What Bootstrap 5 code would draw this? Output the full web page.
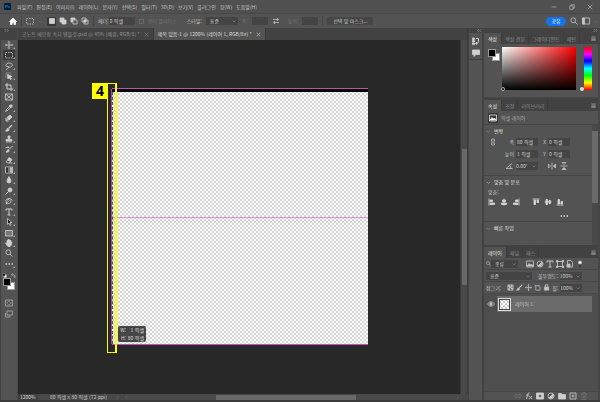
<!DOCTYPE html>
<html lang="ko">
<head>
<meta charset="utf-8">
<meta name="viewport" content="width=device-width, initial-scale=1">
<title>제목 없음-1</title>
<link href="https://cdn.jsdelivr.net/npm/bootstrap@5.3.0/dist/css/bootstrap.min.css" rel="stylesheet">
<style>
:root{--face:#535353;--strip:#424242;--field:#444;--edge:#454545;--ink:#c4c4c4;--dim:#929292;--faint:#707070}
body{font:5px/8px "Noto Sans CJK KR","Liberation Sans",sans-serif;color:var(--ink);background:var(--face);height:100vh;overflow:hidden;border-bottom:2px solid #3b3b3b;white-space:nowrap}
button,input,select,label,a{font:inherit;color:inherit}
button,.ps-tab{border:0;background:none;padding:0;display:inline-flex;align-items:center;justify-content:center;flex:none}
svg{width:8px;height:8px;fill:none;stroke:currentColor;stroke-width:1.6;flex:none;display:block}
svg.tiny{width:5px;height:5px}
.solid{fill:currentColor}
.menubar{height:13px;padding-left:4px;background:#505050}
.menubar nav{gap:4px;padding-left:6px}
.menubar a{text-decoration:none}
.logo{width:7px;height:7px;stroke:none}
.wincontrols{gap:12px;padding-right:7px}
.wincontrols svg{width:6px;height:6px}
.options{height:15px;border-top:1px solid #484848;padding:0 1px 0 9px}
.vline{width:1px;height:10px;background:#454545;flex:none}
.opt-modes{gap:2px;padding-left:4px}
.opt-modes button{width:9px;height:9px;color:#d0d0d0}
.opt-modes .active{background:#383838}
.fieldbox{height:8px;border:0;border-radius:0;background:var(--field);padding:0 1px;min-width:0;outline:0;color:#cfcfcf}
select.fieldbox{appearance:none;padding:0 7px 0 4px;background:var(--field) url("data:image/svg+xml,%3Csvg xmlns='http://www.w3.org/2000/svg' viewBox='0 0 8 8' fill='none' stroke='%23999'%3E%3Cpath d='M1 3l3 3 3-3'/%3E%3C/svg%3E") no-repeat right 2px center/4px 4px}
.fieldbox:disabled{opacity:1;color:var(--faint)}
.muted{color:var(--faint)}
.stylelabel{padding-left:10px}
.w16{width:16px}.w22{width:22px}.w26{width:26px}.w32{width:32px}.w46{width:46px}
.tick{appearance:none;width:5px;height:5px;border:1px solid #666;margin:0}
.share{background:#1473e6;border-radius:5px;width:20px;height:9px;color:#fff}
.maskbtn{background:#464646;width:46px;height:8px}
.toolcol{width:18px;background:var(--face);border-right:1px solid #484848;border-left:1px solid #424242}
.toolhead{height:12px;background:var(--strip);color:#aaa;padding:0 3px}
.toolcol .tools{height:229px}
.tools button{width:12px;height:10px;position:relative;color:#cfcfcf}
.tools button.active{background:#383838}
.tools button.more::after{content:"";position:absolute;right:0;bottom:1px;border:1px solid;border-color:transparent #aaa #aaa transparent}
.swatches{width:12px;height:20px;margin:0 auto;position:relative}
.chip{position:absolute;width:8px;height:8px;border:1px solid #999}
.chip.back{background:#fff;left:4px;top:4px}
.chip.front{background:#000;left:0;top:0}
.modes{gap:1px}.modes button{height:10px;color:#aaa}
.doctabs{height:12px;background:var(--strip);border-right:1px solid #393939}
.doctabs .ps-tab{color:#8f8f8f;padding:0 4px;gap:4px;border-right:1px solid #393939}
.doctabs .ps-tab.active{background:var(--face);color:#ddd}
.canvas{background:#282828;min-width:0;padding:0 0 2px 2px}
.vbar{width:8px;background:#484848;border-left:1px solid #393939;border-right:1px solid #3c3c3c;color:#777;padding:109px 1px 0}
.vbar i,.hbar i{display:block;background:#686868}
.vbar i{height:136px;width:5px}
.artboard{width:256px;height:257px;position:relative;border:1px solid #c050bc;border-width:1px 0;background:repeating-conic-gradient(#d2d2d2 0 25%,#fff 0 50%) 0 0/4px 4px}
.artboard .pixels{height:3px;background:#000}
.artboard .guide{position:absolute;left:0;right:0;top:128px;height:1px;background:#df91dc}
.guide-left{position:absolute;left:-1px;top:0;bottom:0;width:1px;background:#9c4a99}
.ants{position:absolute;left:0;top:3px;bottom:0;width:4px;border-right:1px dashed #333;border-left:1px dashed #555}
.callout{position:absolute;left:-5px;top:-6px;width:10px;height:270px;border:solid #ff0;border-width:1px 2px 1px 1px}
.callout b{position:absolute;right:7px;top:-1px;width:16px;height:16px;background:#ff0;color:#000;font:bold 14px/16px "Noto Sans",sans-serif;text-align:center}
.readout{position:absolute;left:6px;bottom:2px;width:28px;border-radius:2px;background:#454545;color:#ddd;line-height:8px;padding:0 2px;display:grid;grid-template-columns:6px 1fr;text-align:right}
.statusbar{height:6px;line-height:6px;background:#484848}
.zoomval{width:20px;background:#3f3f3f;padding-left:2px;color:#ddd}
.hbar{padding-right:12px}
.hbar i{width:140px;height:5px}
.dock{width:16px;border-right:2px solid var(--strip);border-left:1px solid #424242;background:var(--face)}
.dockhead{height:5px;background:var(--strip);color:#aaa}
.dockicons{height:27px;border-bottom:1px solid #404040;padding-top:4px;gap:4px;color:#d0d0d0}
.panels{width:116px;border-right:2px solid #464646}
.ptabs{height:11px;background:var(--strip)}
.ptabs .ps-tab{color:#8c8c8c;padding:0 3px;border-right:1px solid #3b3b3b}
.ptabs .ps-tab.active{color:#e8e8e8;background:var(--face);padding:0 4px}
.ptabs .menuicon{margin-left:auto;padding-right:2px}
.colorbody{height:54px;padding:3px 6px 0 4px;border-bottom:1px solid #464646}
.pair{width:14px;height:14px;position:relative;margin-top:2px}
.field2d{height:43px;background:linear-gradient(transparent,#000),linear-gradient(90deg,#fff,#f00);position:relative}
.huebar{width:8px;height:43px;background:linear-gradient(red,#f0f 17%,#00f 33%,#0ff 50%,#0f0 67%,#ff0 83%,red)}
.hueslot{height:44px}
.huedot{width:4px;height:4px;border-radius:50%;background:#ddd}
.pickdot{position:absolute;left:-1px;bottom:-1px;width:4px;height:4px;border:1px solid #aaa;border-radius:50%}
.props{height:147px;border-top:2px solid var(--strip)}
.kind{height:14px;gap:3px;padding-left:4px;border-bottom:1px solid var(--edge);color:#aaa}
.kind span{background:#333;padding:1px;color:#eee}
.section{height:12px;gap:3px;padding-left:2px;color:#e0e0e0}
.section svg{color:#999}
.pgrid{display:grid;grid-template-columns:14px 14px 22px 8px 22px;column-gap:1px;row-gap:4px;align-items:center;padding:1px 0 0 2px}
.pgrid label{text-align:right;padding-right:1px}
.transform{height:51px;border-bottom:1px solid var(--edge)}
.alignbox{height:46px;border-bottom:1px solid var(--edge)}
.alignbox .btns{gap:4px;padding:0 0 0 4px;height:12px}
.alignbox svg{color:#d8d8d8}
.pscroll{width:6px;background:#484848;padding-top:6px}
.pscroll i{display:block;height:72px;background:#6a6a6a}
.layers{border-top:2px solid var(--strip)}
.lrow{height:12px;padding:0 2px;gap:2px;border-bottom:1px solid #484848}
.lrow .filters{gap:2px;padding-left:6px}
.locks{gap:2px}
.locks svg{width:7px;height:7px}
.layerrow{height:16px;margin-top:2px}
.layeritem{background:#6b6b6b;gap:4px;margin-right:6px;padding-left:1px}
.eyecell{width:13px}
.thumb{width:13px;height:13px;border:1px solid #ddd;outline:1px solid #444;outline-offset:-2px;background:repeating-conic-gradient(#ccc 0 25%,#fff 0 50%) 0 0/4px 4px}
.layerlist{background:#4e4e4e}
.lfoot{height:9px;padding-left:30px;gap:3px;color:#cfcfcf;border-top:1px solid #484848}
</style>
<script src="https://cdn.jsdelivr.net/npm/bootstrap@5.3.0/dist/js/bootstrap.bundle.min.js"></script>
</head>
<body class="d-flex flex-column">
<svg class="d-none" aria-hidden="true">
<symbol id="down" viewBox="0 0 16 16"><path d="M3 6l5 5 5-5"/></symbol>
<symbol id="right" viewBox="0 0 16 16"><path d="M5 2l6 6-6 6"/></symbol>
<symbol id="left" viewBox="0 0 16 16"><path d="M11 2L5 8l6 6"/></symbol>
<symbol id="dbl" viewBox="0 0 16 16"><path d="M7 3L2 8l5 5M14 3L9 8l5 5"/></symbol>
<symbol id="dblr" viewBox="0 0 16 16"><path d="M2 3l5 5-5 5M9 3l5 5-5 5"/></symbol>
<symbol id="burger" viewBox="0 0 16 16"><path d="M1 3h14M1 7h14M1 11h14M1 14h14"/></symbol>
<symbol id="close" viewBox="0 0 16 16"><path d="M2 2l12 12M14 2L2 14"/></symbol>
<symbol id="home" viewBox="0 0 16 16"><path class="solid" d="M8 2L1 9h2v6h3v-4h4v4h3V9h2z"/></symbol>
<symbol id="marquee" viewBox="0 0 16 16"><path stroke-dasharray="3 2" d="M1 3h14v11H1z"/></symbol>
<symbol id="square" viewBox="0 0 16 16"><path class="solid" d="M3 3h10v10H3z"/></symbol>
<symbol id="union" viewBox="0 0 16 16"><path class="solid" d="M2 2h8v4h4v8H6v-4H2z"/></symbol>
<symbol id="subtract" viewBox="0 0 16 16"><path d="M6 6h8v8H6z"/><path class="solid" d="M2 2h8v3H5v5H2z"/></symbol>
<symbol id="intersect" viewBox="0 0 16 16"><path d="M2 2h8v8H2zM6 6h8v8H6z"/><path class="solid" d="M6 6h4v4H6z"/></symbol>
<symbol id="swap" viewBox="0 0 16 16"><path d="M2 5h11M10 2l3 3-3 3M14 11H3M6 8l-3 3 3 3"/></symbol>
<symbol id="search" viewBox="0 0 16 16"><circle cx="6.500" cy="6.500" r="4.800"/><path d="M10 10l5 5"/></symbol>
<symbol id="layout" viewBox="0 0 16 16"><path d="M1 2h14v12H1z"/><path class="solid" d="M1 2h4v12H1z"/></symbol>
<symbol id="move" viewBox="0 0 16 16"><path d="M8 1v14M1 8h14M6 3l2-2 2 2M6 13l2 2 2-2M3 6L1 8l2 2M13 6l2 2-2 2"/></symbol>
<symbol id="lasso" viewBox="0 0 16 16"><path d="M4 10C-1 7 3 2 9 2s8 6 2 8c-3 1-6 0-6-1s3 0 2 2-3 4-5 4"/></symbol>
<symbol id="quick" viewBox="0 0 16 16"><path stroke-dasharray="2 2" d="M2 11V2h10"/><path class="solid" d="M5 5l9 4-4 1 3 4-2 1-3-4-2 3z"/></symbol>
<symbol id="crop" viewBox="0 0 16 16"><path stroke-width="2" d="M4 0v12h12M0 4h12v12"/></symbol>
<symbol id="frame" viewBox="0 0 16 16"><path d="M1 2h14v12H1zM1 2l14 12M15 2L1 14"/></symbol>
<symbol id="dropper" viewBox="0 0 16 16"><path d="M9 5L3 11l-2 4 4-2 6-6"/><path class="solid" d="M8 4l2-1 2-2 3 3-2 2-1 2z"/></symbol>
<symbol id="heal" viewBox="0 0 16 16"><path class="solid" d="M4 7l6-5 4 4-6 6z"/><path stroke-width="2" d="M2 8v6h5M3 11l4 1"/></symbol>
<symbol id="brush" viewBox="0 0 16 16"><path stroke-width="2.500" d="M14 2L7 9"/><path class="solid" d="M6 9c-4 0-1 4-5 5 5 1 8-1 7-3z"/></symbol>
<symbol id="stamp" viewBox="0 0 16 16"><path class="solid" d="M6 2h4v3L9 9h5v3H2V9h5L6 5z"/><path d="M2 14h12"/></symbol>
<symbol id="history" viewBox="0 0 16 16"><path stroke-width="2" d="M15 2L8 9"/><path class="solid" d="M7 9c-3 0-2 4-5 5 4 1 7-1 6-3z"/><path d="M1 5h7L5 2"/></symbol>
<symbol id="eraser" viewBox="0 0 16 16"><path class="solid" d="M8 3l6 4-3 4-6-3z"/><path d="M5 8l-3 4 4 2h3l2-3M8 14h7"/></symbol>
<symbol id="grad" viewBox="0 0 16 16"><path class="gradbox" d="M1 2h14v12H1z"/><path stroke="none" fill="#333" d="M2 3h4v10H2z"/><path stroke="none" fill="#777" d="M6 3h4v10H6z"/><path stroke="none" fill="#bbb" d="M10 3h4v10h-4z"/></symbol>
<symbol id="drop" viewBox="0 0 16 16"><path class="solid" d="M8 1c2 4 4 6 4 9a4 4 0 0 1-8 0c0-3 2-5 4-9z"/></symbol>
<symbol id="dodge" viewBox="0 0 16 16"><circle class="solid" cx="10" cy="6" r="4"/><path stroke-width="2" d="M7 9l-6 6"/></symbol>
<symbol id="pen" viewBox="0 0 16 16"><path d="M2 13c0-5 2-8 6-8l4 4c-1 4-5 5-10 4zM2 13l5-4M10 3l4 4M1 7c3-5 11-6 13 0"/></symbol>
<symbol id="type" viewBox="0 0 16 16"><path stroke-width="2" d="M2 5V2h12v3M8 2v12M5 14h6"/></symbol>
<symbol id="arrow" viewBox="0 0 16 16"><path fill="#111" d="M5 1v12l3-3 2 5 2-1-2-5h4z"/></symbol>
<symbol id="rect" viewBox="0 0 16 16"><path fill="#777" d="M1 3h14v11H1z"/></symbol>
<symbol id="hand" viewBox="0 0 16 16"><path class="solid" d="M5 14L1 8l3 1V3h2v4-6h2v6-5h2v5-4h2v5l2-2-2 7-2 2H6z"/></symbol>
<symbol id="dots" viewBox="0 0 16 16"><path stroke-width="3" stroke-dasharray="3 3" d="M1 8h15"/></symbol>
<symbol id="mask" viewBox="0 0 16 16"><path d="M1 2h14v12H1z"/><circle cx="8" cy="8" r="3.500" stroke-dasharray="2 1"/></symbol>
<symbol id="screen" viewBox="0 0 16 16"><path d="M4 2h11v8H4zM1 6v8h9v-3"/></symbol>
<symbol id="mini" viewBox="0 0 16 16"><path fill="#fff" d="M6 6h8v8H6z"/><path fill="#000" d="M1 1h9v9H1z"/></symbol>
<symbol id="bend" viewBox="0 0 16 16"><path stroke-width="2" d="M2 5h7q3 0 3 8M5 1L1 5l4 4M9 11l3 4 3-4"/></symbol>
<symbol id="histpanel" viewBox="0 0 16 16"><path class="solid" d="M1 2h4v3H1zM1 7h4v3H1zM1 12h4v3H1z"/><path stroke-width="2" d="M8 3h5v6c0 3-2 4-5 4M10 10l-3 3 3 2"/></symbol>
<symbol id="bubble" viewBox="0 0 16 16"><path class="solid" d="M1 2h14v9H8l-4 4v-4H1z"/></symbol>
<symbol id="image" viewBox="0 0 16 16"><path d="M1 2h14v12H1z"/><path class="solid" d="M2 12l4-5 3 3 2-2 3 4z"/></symbol>
<symbol id="link" viewBox="0 0 16 16"><path d="M5 7V3q3-3 6 0v4M5 9v4q3 3 6 0V9M8 5v6"/></symbol>
<symbol id="hlink" viewBox="0 0 16 16"><path d="M7 5H3q-3 3 0 6h4M9 5h4q3 3 0 6H9M5 8h6"/></symbol>
<symbol id="angle" viewBox="0 0 16 16"><path d="M14 3L2 13h13M9 7q3 2 3 6"/></symbol>
<symbol id="fliph" viewBox="0 0 16 16"><path d="M8 1v14M1 4v8l4-4z"/><path class="solid" d="M15 4v8l-4-4z"/></symbol>
<symbol id="flipv" viewBox="0 0 16 16"><path d="M1 8h14M4 1h8L8 5z"/><path class="solid" d="M4 15h8l-4-4z"/></symbol>
<symbol id="al" viewBox="0 0 16 16"><path d="M2 1v14"/><path class="solid" d="M4 4h5v3H4zM4 10h9v3H4z"/></symbol>
<symbol id="ac" viewBox="0 0 16 16"><path d="M8 1v14"/><path class="solid" d="M5 4h6v3H5zM3 10h10v3H3z"/></symbol>
<symbol id="ar" viewBox="0 0 16 16"><path d="M14 1v14"/><path class="solid" d="M7 4h5v3H7zM3 10h9v3H3z"/></symbol>
<symbol id="at" viewBox="0 0 16 16"><path d="M1 2h14"/><path class="solid" d="M4 4h3v9H4zM10 4h3v5h-3z"/></symbol>
<symbol id="am" viewBox="0 0 16 16"><path d="M1 8h14"/><path class="solid" d="M4 3h3v10H4zM10 5h3v6h-3z"/></symbol>
<symbol id="ab" viewBox="0 0 16 16"><path d="M1 14h14"/><path class="solid" d="M4 3h3v9H4zM10 7h3v5h-3z"/></symbol>
<symbol id="adjust" viewBox="0 0 16 16"><circle cx="8" cy="8" r="6"/><path class="solid" d="M12 4A6 6 0 0 1 4 12z"/></symbol>
<symbol id="shape" viewBox="0 0 16 16"><path d="M3 3h10v10H3z"/><path class="solid" d="M1 1h3v3H1zM12 1h3v3h-3zM1 12h3v3H1zM12 12h3v3h-3z"/></symbol>
<symbol id="smart" viewBox="0 0 16 16"><path d="M3 1h7l3 4v9H3z"/><path class="solid" d="M2 8h6v6H2z"/></symbol>
<symbol id="toggle" viewBox="0 0 16 16"><path stroke="#333" stroke-width="3" d="M8 9v6"/><circle fill="#fff" cx="8" cy="5" r="3"/></symbol>
<symbol id="checker" viewBox="0 0 16 16"><path d="M2 2h12v12H2z"/><path class="solid" d="M3 3h3v3H3zM9 3h3v3H9zM6 6h3v3H6zM3 10h3v3H3zM10 9h3v3h-3z"/></symbol>
<symbol id="artlock" viewBox="0 0 16 16"><path d="M2 4h9M14 7v7H4V2M11 2v3h3"/></symbol>
<symbol id="lock" viewBox="0 0 16 16"><path class="solid" d="M3 7h10v7H3z"/><path stroke-width="2" d="M5 7V2h6v5"/></symbol>
<symbol id="eye" viewBox="0 0 16 16"><path d="M1 8q7-9 14 0-7 9-14 0z"/><circle class="solid" cx="8" cy="8" r="2.500"/></symbol>
<symbol id="fx" viewBox="0 0 16 16"><path d="M9 2q-3-1-4 4L3 14M2 6h6M8 8l6 6M14 8l-6 6"/></symbol>
<symbol id="addmask" viewBox="0 0 16 16"><path fill="currentColor" fill-rule="evenodd" d="M1 2h14v12H1zM8 5a3 3 0 1 0 .1 0z"/></symbol>
<symbol id="folder" viewBox="0 0 16 16"><path class="solid" d="M1 3h6l1 2h7v9H1z"/></symbol>
<symbol id="plus" viewBox="0 0 16 16"><path d="M2 2h12v12H2zM8 5v6M5 8h6"/></symbol>
<symbol id="trash" viewBox="0 0 16 16"><path d="M2 4h12M6 4V1h4v3M4 4v11h8V4M7 7v5M9 7v5"/></symbol>
</svg>

<header>
<div class="menubar d-flex align-items-center">
<svg class="logo" viewBox="0 0 16 16" role="img" aria-label="Ps"><rect width="16" height="16" rx="3" fill="#001e36"/><text x="2" y="12" font-size="10" font-family="Liberation Sans, sans-serif" fill="#31a8ff">Ps</text></svg>
<nav class="d-flex">
<a href="#">파일(F)</a><a href="#">편집(E)</a><a href="#">이미지(I)</a><a href="#">레이어(L)</a><a href="#">문자(Y)</a><a href="#">선택(S)</a><a href="#">필터(T)</a><a href="#">3D(D)</a><a href="#">보기(V)</a><a href="#">플러그인</a><a href="#">창(W)</a><a href="#">도움말(H)</a>
</nav>
<div class="wincontrols d-flex ms-auto">
<button aria-label="최소화"><svg viewBox="0 0 16 16"><path d="M2 8h12"/></svg></button>
<button aria-label="최대화"><svg viewBox="0 0 16 16"><path d="M2 5h9v9H2zM5 5V2h9v9h-3"/></svg></button>
<button aria-label="닫기"><svg><use href="#close"/></svg></button>
</div>
</div>
<div class="options d-flex align-items-center">
<button aria-label="홈" class="text-white"><svg><use href="#home"/></svg></button>
<span class="vline mx-1"></span>
<button aria-label="사각형 선택 윤곽"><svg><use href="#marquee"/></svg></button>
<svg class="tiny ms-1 muted"><use href="#down"/></svg>
<div class="opt-modes d-flex">
<button class="active" aria-label="새 선택"><svg><use href="#square"/></svg></button>
<button aria-label="추가"><svg><use href="#union"/></svg></button>
<button aria-label="빼기"><svg><use href="#subtract"/></svg></button>
<button aria-label="교차"><svg><use href="#intersect"/></svg></button>
</div>
<span class="vline mx-1"></span>
<label for="feather">페더:</label><input id="feather" class="fieldbox w26" value="0 픽셀">
<input type="checkbox" id="aa" class="tick ms-1" disabled><label for="aa" class="muted ps-1">앤티 앨리어스</label>
<label for="style" class="stylelabel pe-1">스타일:</label><select id="style" class="fieldbox w32"><option>표준</option></select>
<label for="ow" class="muted px-1">폭:</label><input id="ow" class="fieldbox w16" disabled>
<button aria-label="바꾸기" class="px-1"><svg><use href="#swap"/></svg></button>
<label for="oh" class="muted px-1">높이:</label><input id="oh" class="fieldbox w16" disabled>
<span class="vline mx-1"></span>
<button class="maskbtn">선택 및 마스크...</button>
<div class="d-flex align-items-center ms-auto gap-1">
<button class="share">공유</button>
<button aria-label="검색"><svg><use href="#search"/></svg></button>
<button aria-label="작업 영역"><svg><use href="#layout"/></svg></button>
<svg class="tiny muted"><use href="#down"/></svg>
</div>
</div>
</header>

<main class="d-flex flex-grow-1">
<aside class="toolcol flex-shrink-0">
<div class="toolhead"><svg class="tiny"><use href="#dblr"/></svg></div>
<div class="tools d-flex flex-column align-items-center justify-content-between">
<button aria-label="이동" class="more"><svg><use href="#move"/></svg></button>
<button aria-label="선택 윤곽" class="more active"><svg><use href="#marquee"/></svg></button>
<button aria-label="올가미" class="more"><svg><use href="#lasso"/></svg></button>
<button aria-label="개체 선택" class="more"><svg><use href="#quick"/></svg></button>
<button aria-label="자르기" class="more"><svg><use href="#crop"/></svg></button>
<button aria-label="프레임"><svg><use href="#frame"/></svg></button>
<button aria-label="스포이드" class="more"><svg><use href="#dropper"/></svg></button>
<button aria-label="복구 브러시" class="more"><svg><use href="#heal"/></svg></button>
<button aria-label="브러시" class="more"><svg><use href="#brush"/></svg></button>
<button aria-label="도장" class="more"><svg><use href="#stamp"/></svg></button>
<button aria-label="작업 내역 브러시" class="more"><svg><use href="#history"/></svg></button>
<button aria-label="지우개" class="more"><svg><use href="#eraser"/></svg></button>
<button aria-label="그레이디언트" class="more"><svg><use href="#grad"/></svg></button>
<button aria-label="흐림" class="more"><svg><use href="#drop"/></svg></button>
<button aria-label="닷지" class="more"><svg><use href="#dodge"/></svg></button>
<button aria-label="펜" class="more"><svg><use href="#pen"/></svg></button>
<button aria-label="문자" class="more"><svg><use href="#type"/></svg></button>
<button aria-label="패스 선택" class="more"><svg><use href="#arrow"/></svg></button>
<button aria-label="사각형" class="more"><svg><use href="#rect"/></svg></button>
<button aria-label="손" class="more"><svg><use href="#hand"/></svg></button>
<button aria-label="돋보기"><svg><use href="#search"/></svg></button>
<button aria-label="도구 모음 편집" class="more"><svg><use href="#dots"/></svg></button>
</div>
<div class="d-flex justify-content-center gap-1 py-1 pb-0"><svg class="tiny"><use href="#mini"/></svg><svg class="tiny"><use href="#bend"/></svg></div>
<div class="swatches"><span class="chip back"></span><span class="chip front"></span></div>
<div class="modes d-flex flex-column align-items-center">
<button aria-label="빠른 마스크"><svg><use href="#mask"/></svg></button>
<button aria-label="화면 모드"><svg><use href="#screen"/></svg></button>
</div>
</aside>

<section class="d-flex flex-column flex-grow-1">
<div class="doctabs d-flex" role="tablist">
<div class="ps-tab" role="tab">굿노트 메모장 속지 템플릿.psd @ 45% (배경, RGB/8) * <button aria-label="닫기"><svg class="tiny"><use href="#close"/></svg></button></div>
<div class="ps-tab active" role="tab" aria-selected="true">제목 없음-1 @ 1200% (레이어 1, RGB/8#) * <button aria-label="닫기"><svg class="tiny"><use href="#close"/></svg></button></div>
</div>
<div class="d-flex flex-grow-1">
<div class="canvas d-flex flex-grow-1 align-items-center justify-content-center">
<div class="artboard">
<div class="pixels"></div><span class="guide"></span><span class="guide-left"></span><span class="ants"></span>
<div class="callout"><b>4</b></div>
<div class="readout"><span>W:</span><span>1 픽셀</span><span>H:</span><span>80 픽셀</span></div>
</div>
</div>
<div class="vbar"><i></i></div>
</div>
<div class="statusbar d-flex align-items-center">
<span class="zoomval">1200%</span><span class="ps-2 ms-1">80 픽셀 x 80 픽셀 (72 ppi)</span>
<svg class="tiny ms-2 muted"><use href="#right"/></svg><svg class="tiny ms-1 muted"><use href="#left"/></svg>
<div class="hbar d-flex flex-grow-1 justify-content-center"><i></i></div>
<svg class="tiny me-2 muted"><use href="#right"/></svg>
</div>
</section>

<aside class="dock flex-shrink-0">
<div class="dockhead d-flex justify-content-end"><svg class="tiny"><use href="#dbl"/></svg></div>
<div class="dockicons d-flex flex-column align-items-center">
<button aria-label="작업 내역"><svg><use href="#histpanel"/></svg></button>
<button aria-label="댓글"><svg><use href="#bubble"/></svg></button>
</div>
</aside>

<aside class="panels d-flex flex-column flex-shrink-0">
<div class="dockhead d-flex justify-content-end"><svg class="tiny"><use href="#dblr"/></svg></div>
<div class="ptabs d-flex"><button class="ps-tab active">색상</button><button class="ps-tab">색상 견본</button><button class="ps-tab">그레이디언트</button><button class="ps-tab">패턴</button><button class="menuicon" aria-label="메뉴"><svg class="tiny"><use href="#burger"/></svg></button></div>
<div class="colorbody d-flex align-items-start">
<div class="pair"><span class="chip back"></span><span class="chip front"></span></div>
<div class="field2d flex-grow-1"><span class="pickdot"></span></div>
<div class="hueslot d-flex align-items-end ps-1"><span class="huedot"></span></div>
<div class="huebar"></div>
</div>

<div class="props d-flex flex-column">
<div class="ptabs d-flex"><button class="ps-tab active">속성</button><button class="ps-tab">조정</button><button class="ps-tab">라이브러리</button><button class="menuicon" aria-label="메뉴"><svg class="tiny"><use href="#burger"/></svg></button></div>
<div class="kind d-flex align-items-center"><span><svg><use href="#image"/></svg></span>픽셀 레이어</div>
<div class="d-flex flex-grow-1">
<div class="flex-grow-1">
<div class="transform">
<div class="section d-flex align-items-center"><svg class="tiny"><use href="#down"/></svg>변형</div>
<div class="pgrid">
<svg class="mx-auto"><use href="#link"/></svg><label for="pw">폭</label><input id="pw" class="fieldbox" value="80 픽셀"><label for="px">X</label><input id="px" class="fieldbox" value="0 픽셀">
<span></span><label for="ph">높이</label><input id="ph" class="fieldbox" value="1 픽셀"><label for="py">Y</label><input id="py" class="fieldbox" value="0 픽셀">
<span></span><label for="pa" aria-label="각도"><svg class="ms-1"><use href="#angle"/></svg></label><select id="pa" class="fieldbox ps-0"><option>0.00°</option></select><span></span><div class="d-flex gap-1"><svg><use href="#fliph"/></svg><svg><use href="#flipv"/></svg></div>
</div>
</div>
<div class="alignbox">
<div class="section d-flex align-items-center"><svg class="tiny"><use href="#down"/></svg>맞춤 및 분포</div>
<div class="ps-1">맞춤:</div>
<div class="btns d-flex align-items-center">
<button aria-label="왼쪽"><svg><use href="#al"/></svg></button><button aria-label="가운데"><svg><use href="#ac"/></svg></button><button aria-label="오른쪽"><svg><use href="#ar"/></svg></button>
<button aria-label="위쪽" class="ps-2"><svg><use href="#at"/></svg></button><button aria-label="중간"><svg><use href="#am"/></svg></button><button aria-label="아래쪽"><svg><use href="#ab"/></svg></button>
</div>
<div class="d-flex justify-content-end pe-4 pt-1"><button aria-label="더 보기"><svg><use href="#dots"/></svg></button></div>
</div>
<div class="section d-flex align-items-center"><svg class="tiny"><use href="#down"/></svg>빠른 작업</div>
</div>
<div class="pscroll"><i></i></div>
</div>
</div>

<div class="layers d-flex flex-column flex-grow-1">
<div class="ptabs d-flex"><button class="ps-tab active">레이어</button><button class="ps-tab">채널</button><button class="ps-tab">패스</button><button class="menuicon" aria-label="메뉴"><svg class="tiny"><use href="#burger"/></svg></button></div>
<div class="lrow d-flex align-items-center"><div class="d-flex align-items-center w32 flex-shrink-0"><svg class="tiny"><use href="#search"/></svg><select aria-label="종류" class="fieldbox flex-grow-1 ps-1"><option>종류</option></select></div>
<div class="filters d-flex"><svg><use href="#image"/></svg><svg><use href="#adjust"/></svg><svg><use href="#type"/></svg><svg><use href="#shape"/></svg><svg><use href="#smart"/></svg><svg><use href="#toggle"/></svg></div></div>
<div class="lrow d-flex align-items-center"><select aria-label="혼합 모드" class="fieldbox w46"><option>표준</option></select><label for="op" class="ps-1">불투명도:</label><select id="op" class="fieldbox w22 px-0"><option>100%</option></select></div>
<div class="lrow d-flex align-items-center"><span>잠그기:</span><div class="locks d-flex ps-1"><svg><use href="#checker"/></svg><svg><use href="#brush"/></svg><svg><use href="#move"/></svg><svg><use href="#artlock"/></svg><svg><use href="#lock"/></svg></div><label for="fl">칠:</label><select id="fl" class="fieldbox w22 px-0"><option>100%</option></select></div>
<div class="layerlist flex-grow-1">
<div class="layerrow d-flex"><span class="eyecell d-flex align-items-center justify-content-center"><svg><use href="#eye"/></svg></span><div class="layeritem d-flex flex-grow-1 align-items-center"><span class="thumb"></span>레이어 1</div></div>
</div>
<div class="lfoot d-flex align-items-center">
<button aria-label="연결" class="muted"><svg><use href="#hlink"/></svg></button><button aria-label="스타일"><svg><use href="#fx"/></svg></button><button aria-label="마스크"><svg><use href="#addmask"/></svg></button><button aria-label="조정"><svg><use href="#adjust"/></svg></button><button aria-label="그룹"><svg><use href="#folder"/></svg></button><button aria-label="새 레이어"><svg><use href="#plus"/></svg></button><button aria-label="삭제" class="muted"><svg><use href="#trash"/></svg></button>
</div>
</div>
</aside>
</main>
</body>
</html>
